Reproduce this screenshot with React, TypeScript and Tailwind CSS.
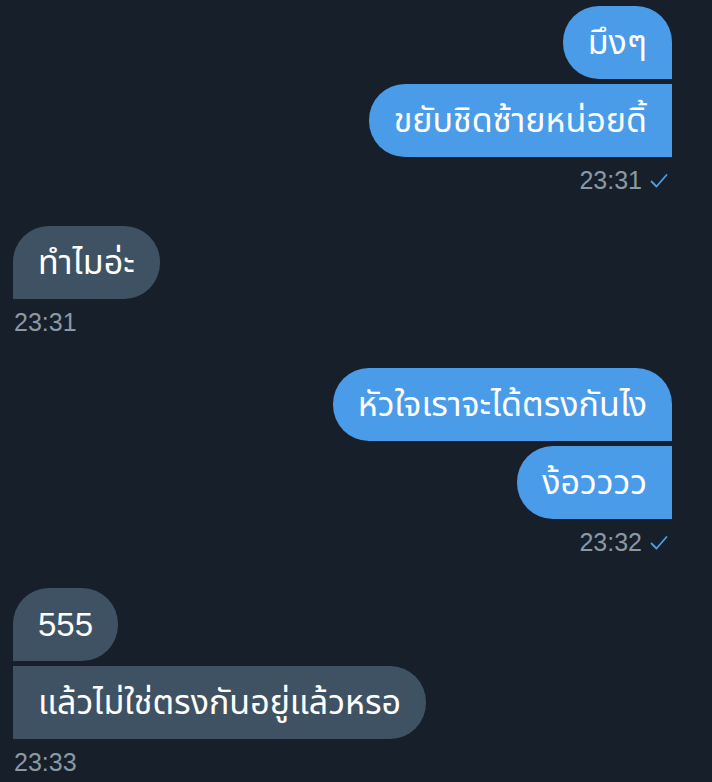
import { Fragment } from 'react';

type Msg = { text: string };
type Group = { side: 'me' | 'them'; time: string; messages: Msg[] };

const groups: Group[] = [
  { side: 'me', time: '23:31', messages: [{ text: 'มึงๆ' }, { text: 'ขยับชิดซ้ายหน่อยดิ้' }] },
  { side: 'them', time: '23:31', messages: [{ text: 'ทำไมอ่ะ' }] },
  { side: 'me', time: '23:32', messages: [{ text: 'หัวใจเราจะได้ตรงกันไง' }, { text: 'ง้อวววว' }] },
  { side: 'them', time: '23:33', messages: [{ text: '555' }, { text: 'แล้วไม่ใช่ตรงกันอยู่แล้วหรอ' }] },
];

function bubbleShape(side: 'me' | 'them', index: number) {
  const first = index === 0;
  if (side === 'me') {
    if (first) return 'rounded-[36px] rounded-br-none';
    return 'rounded-[36px] rounded-tr-none rounded-br-none';
  }
  if (first) return 'rounded-[36px] rounded-bl-none';
  return 'rounded-[36px] rounded-tl-none rounded-bl-none';
}

function Check() {
  return (
    <svg width="18" height="16" viewBox="0 0 18 16" fill="none" className="ml-[8px]">
      <path d="M1.5 8.5 L6.5 13.5 L16.5 2" stroke="#4a9fe8" strokeWidth="1.8" strokeLinecap="round" strokeLinejoin="round" />
    </svg>
  );
}

export default function App() {
  return (
    <div
      className="w-[712px] h-[782px] overflow-hidden bg-[#17202a] pr-[40px] pl-[13px] pt-[6px] flex flex-col"
      style={{ fontFamily: '"Liberation Sans", "Noto Sans Thai", "Noto Sans", sans-serif' }}
    >
      {groups.map((g, gi) => (
        <div
          key={gi}
          className={`flex flex-col gap-[5px] ${g.side === 'me' ? 'items-end' : 'items-start'} ${gi > 0 ? 'mt-[31px]' : ''}`}
        >
          {g.messages.map((m, mi) => (
            <Fragment key={mi}>
              <div
                className={`h-[73px] flex items-center px-[25px] ${/^[0-9]+$/.test(m.text) ? 'text-[33px]' : 'text-[34px]'} text-white whitespace-nowrap ${
                  g.side === 'me' ? 'bg-[#4a9be8]' : 'bg-[#3f5263]'
                } ${bubbleShape(g.side, mi)}`}
              >
                {m.text}
              </div>
            </Fragment>
          ))}
          <div
            className={`mt-[5px] h-[28px] flex items-center text-[25px] text-[#8b98a5] ${
              g.side === 'me' ? 'mr-[4px]' : 'ml-[1px]'
            }`}
          >
            <span>{g.time}</span>
            {g.side === 'me' && <Check />}
          </div>
        </div>
      ))}
    </div>
  );
}
